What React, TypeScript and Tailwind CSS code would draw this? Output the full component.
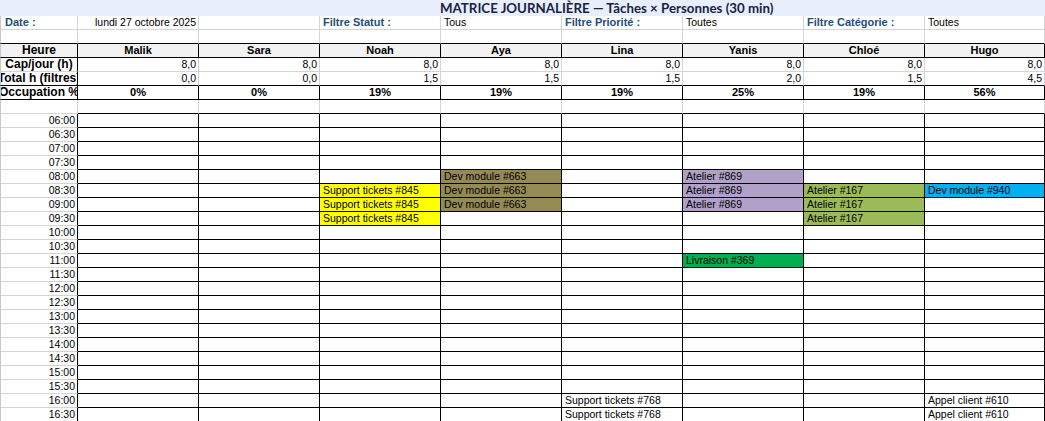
import React from 'react';

const people = ['Malik', 'Sara', 'Noah', 'Aya', 'Lina', 'Yanis', 'Chloé', 'Hugo'];
const capacity = ['8,0', '8,0', '8,0', '8,0', '8,0', '8,0', '8,0', '8,0'];
const totals = ['0,0', '0,0', '1,5', '1,5', '1,5', '2,0', '1,5', '4,5'];
const occupation = ['0%', '0%', '19%', '19%', '19%', '25%', '19%', '56%'];

const times: string[] = [];
for (let h = 6; h <= 16; h++) {
  times.push(`${String(h).padStart(2, '0')}:00`);
  times.push(`${String(h).padStart(2, '0')}:30`);
}

type Task = { label: string; bg: string };

// cellules planifiées : personne|heure
const tasks: Record<string, Task> = {
  'Noah|08:30': { label: 'Support tickets #845', bg: 'bg-[#ffff00]' },
  'Noah|09:00': { label: 'Support tickets #845', bg: 'bg-[#ffff00]' },
  'Noah|09:30': { label: 'Support tickets #845', bg: 'bg-[#ffff00]' },
  'Aya|08:00': { label: 'Dev module #663', bg: 'bg-[#948a54]' },
  'Aya|08:30': { label: 'Dev module #663', bg: 'bg-[#948a54]' },
  'Aya|09:00': { label: 'Dev module #663', bg: 'bg-[#948a54]' },
  'Yanis|08:00': { label: 'Atelier #869', bg: 'bg-[#b1a0c7]' },
  'Yanis|08:30': { label: 'Atelier #869', bg: 'bg-[#b1a0c7]' },
  'Yanis|09:00': { label: 'Atelier #869', bg: 'bg-[#b1a0c7]' },
  'Yanis|11:00': { label: 'Livraison #369', bg: 'bg-[#00b050]' },
  'Chloé|08:30': { label: 'Atelier #167', bg: 'bg-[#9bbb59]' },
  'Chloé|09:00': { label: 'Atelier #167', bg: 'bg-[#9bbb59]' },
  'Chloé|09:30': { label: 'Atelier #167', bg: 'bg-[#9bbb59]' },
  'Hugo|08:30': { label: 'Dev module #940', bg: 'bg-[#00b0f0]' },
  'Lina|16:00': { label: 'Support tickets #768', bg: 'bg-white' },
  'Lina|16:30': { label: 'Support tickets #768', bg: 'bg-white' },
  'Hugo|16:00': { label: 'Appel client #610', bg: 'bg-white' },
  'Hugo|16:30': { label: 'Appel client #610', bg: 'bg-white' },
};

const Cell: React.FC<{ className?: string; children?: React.ReactNode }> = ({ className = '', children }) => (
  <div className={`flex h-[14px] items-center overflow-hidden whitespace-nowrap border-r border-b leading-[13px] ${className}`}>
    {children}
  </div>
);

const label = 'font-bold text-[11px] text-[#1f4e79]';
const rowHead = 'justify-center border-l border-l-[#c8c8c8] border-r-black font-bold text-[12px]';

export default function App() {
  return (
    <div
      className="h-[421px] w-[1045px] overflow-hidden bg-white text-[10.5px] text-black"
      style={{ fontFamily: '"Liberation Sans", Arial, sans-serif' }}
    >
      <div className="grid grid-cols-[78px_repeat(7,121px)_120px]">
        {/* titre */}
        <div
          className="col-span-9 flex h-[16px] items-center bg-[#e8eefb] pl-[440px] text-[13.3px] font-bold leading-[16px] text-[#17233f]"
          style={{ fontFamily: 'Lato, "Liberation Sans", sans-serif' }}
        >
          MATRICE JOURNALIÈRE — Tâches × Personnes (30 min)
        </div>

        {/* filtres */}
        <Cell className={`border-l border-l-[#c8c8c8] border-r-[#d4d4d4] border-b-[#d4d4d4] px-[4px] ${label}`}>Date :</Cell>
        <Cell className="justify-end border-r-[#d4d4d4] border-b-[#d4d4d4] pr-[2px]">lundi 27 octobre 2025</Cell>
        <Cell className="border-r-[#d4d4d4] border-b-[#d4d4d4]" />
        <Cell className={`border-r-[#d4d4d4] border-b-[#d4d4d4] px-[3px] ${label}`}>Filtre Statut :</Cell>
        <Cell className="border-r-[#d4d4d4] border-b-[#d4d4d4] px-[3px]">Tous</Cell>
        <Cell className={`border-r-[#d4d4d4] border-b-[#d4d4d4] px-[3px] ${label}`}>Filtre Priorité :</Cell>
        <Cell className="border-r-[#d4d4d4] border-b-[#d4d4d4] px-[3px]">Toutes</Cell>
        <Cell className={`border-r-[#d4d4d4] border-b-[#d4d4d4] px-[3px] ${label}`}>Filtre Catégorie :</Cell>
        <Cell className="border-r-[#d4d4d4] border-b-[#d4d4d4] px-[3px]">Toutes</Cell>

        {/* ligne vide */}
        <Cell className="border-l border-l-[#c8c8c8] border-r-[#d4d4d4] border-b-black" />
        {people.map(p => (
          <Cell key={`e-${p}`} className="border-r-[#d4d4d4] border-b-black" />
        ))}

        {/* en-têtes */}
        <Cell className={`${rowHead} border-b-black bg-[#f2f2f2]`}>Heure</Cell>
        {people.map(p => (
          <Cell key={`h-${p}`} className="justify-center border-r-black border-b-black bg-[#f2f2f2] text-[11px] font-bold">
            {p}
          </Cell>
        ))}

        <Cell className={`${rowHead} border-b-[#d4d4d4]`}>Cap/jour (h)</Cell>
        {capacity.map((v, i) => (
          <Cell key={`c-${i}`} className="justify-end border-r-[#d4d4d4] border-b-[#d4d4d4] pr-[2px]">
            {v}
          </Cell>
        ))}

        <Cell className={`${rowHead} border-b-black`}>Total h (filtres)</Cell>
        {totals.map((v, i) => (
          <Cell key={`t-${i}`} className="justify-end border-r-[#d4d4d4] border-b-black pr-[2px]">
            {v}
          </Cell>
        ))}

        <Cell className={`${rowHead} border-b-black`}>Occupation %</Cell>
        {occupation.map((v, i) => (
          <Cell key={`o-${i}`} className="justify-center border-r-black border-b-black text-[11px] font-bold">
            {v}
          </Cell>
        ))}

        {/* ligne vide */}
        <Cell className="border-l border-l-[#c8c8c8] border-r-[#d4d4d4] border-b-[#d4d4d4]" />
        {people.map(p => (
          <Cell key={`s-${p}`} className="border-r-[#d4d4d4] border-b-black" />
        ))}

        {/* créneaux */}
        {times.map(t => (
          <React.Fragment key={t}>
            <Cell className="justify-end border-l border-l-[#c8c8c8] border-r-black border-b-[#d4d4d4] pr-[2px]">{t}</Cell>
            {people.map(p => {
              const task = tasks[`${p}|${t}`];
              return (
                <Cell key={`${t}-${p}`} className={`border-r-black border-b-black px-[3px] ${task ? task.bg : ''}`}>
                  {task?.label}
                </Cell>
              );
            })}
          </React.Fragment>
        ))}
      </div>
    </div>
  );
}
